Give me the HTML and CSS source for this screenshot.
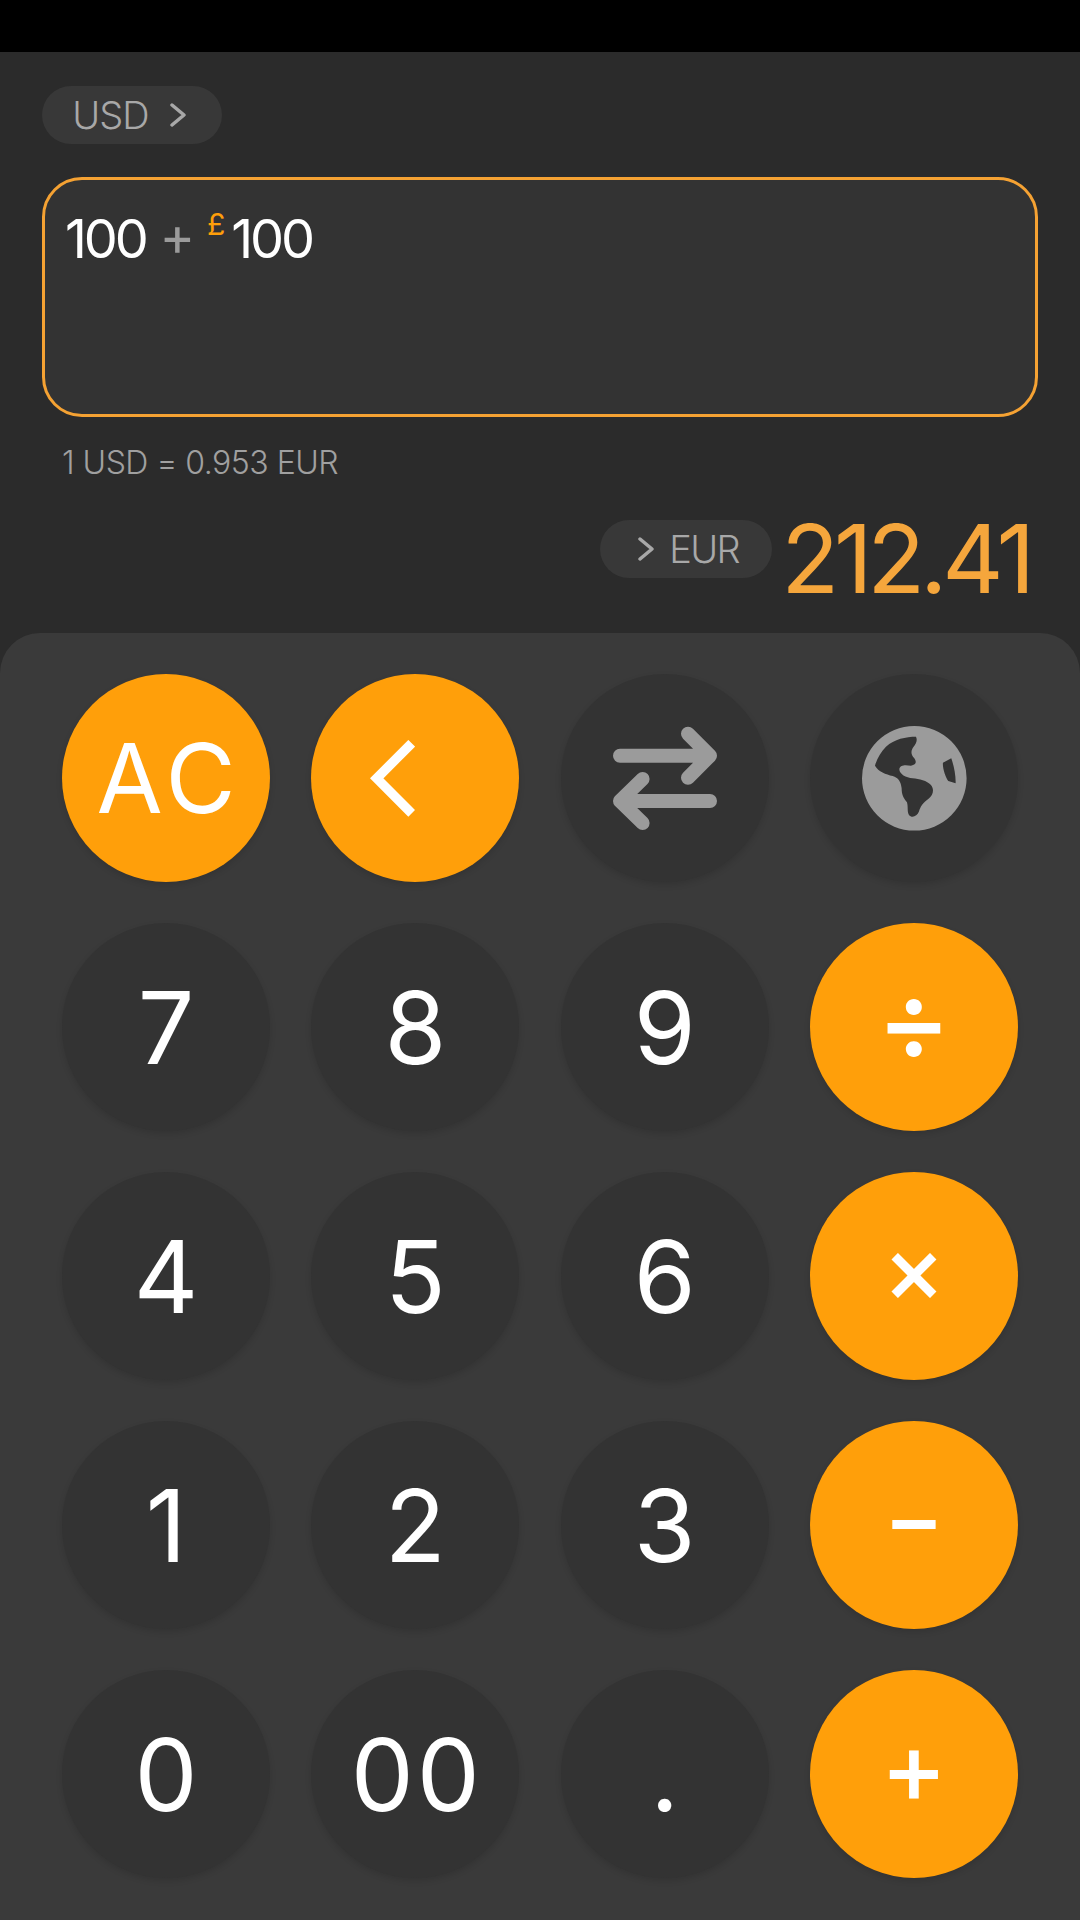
FILE: index.html
```html
<!DOCTYPE html>
<html lang="en">
<head>
<meta charset="utf-8">
<title>Currency calculator</title>
<link rel="stylesheet" href="styles.css">
</head>
<body>
<div class="app">
  <div class="status"></div>
  <section class="display">
    <button class="pill pill-from"><span>USD</span>
      <svg class="chev" viewBox="0 0 16 24"><path d="M2 2l12 10L2 22"/></svg>
    </button>
    <div class="input">
      <span class="num">100</span><span class="op">+</span><span class="cur">£</span><span class="num">100</span>
    </div>
    <div class="rate">1 USD = 0.953 EUR</div>
    <div class="result-row">
      <button class="pill pill-to">
        <svg class="chev" viewBox="0 0 16 24"><path d="M2 2l12 10L2 22"/></svg>
        <span>EUR</span></button>
      <div class="result">212.41</div>
    </div>
  </section>
  <section class="pad">
    <button class="key op-key ac">AC</button>
    <button class="key op-key">
      <svg class="ico-back" viewBox="0 0 45 77"><path d="M41.7 3.3L6.7 38.3l35 35"/></svg>
    </button>
    <button class="key">
      <svg class="ico" viewBox="0 0 120 120"><path d="M15 37.7H105M83 15.7l22 22-22 22M105 83H15M37.6 61L15 83l22.6 22"/></svg>
    </button>
    <button class="key">
      <svg class="ico-globe" viewBox="33 33 314 314"><path fill-rule="evenodd" d="M33 190a157 157 0 1 0 314 0a157 157 0 1 0-314 0zM195 65C165 65 130 72 105 95C90 110 78 130 72 152C82 170 105 178 125 183C142 188 150 200 152 220C152 240 158 250 168 262C172 275 168 290 174 300C182 310 198 305 204 290C208 275 215 265 232 252C248 240 250 222 240 210C228 197 205 192 185 190C165 188 145 178 145 162C148 148 165 150 180 152C195 150 198 142 190 130C178 118 180 105 188 95C196 85 200 75 195 65ZM301 130L276 143C274 160 285 190 292 198L314 205C315 180 308 150 301 130Z"/></svg>
    </button>
    <button class="key">7</button><button class="key">8</button><button class="key">9</button>
    <button class="key op-key sym sym-div">÷</button>
    <button class="key">4</button><button class="key">5</button><button class="key">6</button>
    <button class="key op-key sym sym-mul">×</button>
    <button class="key">1</button><button class="key">2</button><button class="key">3</button>
    <button class="key op-key sym sym-sub">−</button>
    <button class="key">0</button><button class="key double">00</button><button class="key">.</button>
    <button class="key op-key sym sym-add">+</button>
  </section>
</div>
</body>
</html>
```
FILE: styles.css
```css
* { box-sizing: border-box; }
html, body { margin: 0; padding: 0; background: #2b2b2b; }
.app { width: 1080px; height: 1920px; display: flex; flex-direction: column; font-family: Inter, "Liberation Sans", sans-serif; overflow: hidden; }
.status { height: 52px; background: #000; flex: none; }
.display { height: 581px; flex: none; background: #2b2b2b; padding: 34px 42px 0; display: flex; flex-direction: column; align-items: stretch; }
button { font-family: inherit; border: 0; padding: 0; margin: 0; }
.pill { background: #383838; color: #a8a8a8; border-radius: 29px; height: 58px; font-size: 38px; font-weight: 300; letter-spacing: -1px; display: inline-flex; align-items: center; justify-content: center; flex: none; }
.pill-from { width: 180px; gap: 21px; padding-right: 6px; align-self: flex-start; }
.pill-to { width: 172px; gap: 15px; padding-left: 5px; margin-top: 3px; letter-spacing: -1.6px; }
.chev { width: 16px; height: 24px; fill: none; stroke: #a8a8a8; stroke-width: 3.5; stroke-linecap: round; stroke-linejoin: round; }
.input { margin-top: 33px; height: 240px; background: #333; border: 3px solid #f5a233; border-radius: 40px; padding: 26px 20px 0; font-size: 54px; font-weight: 400; letter-spacing: -3.2px; line-height: 66px; display: flex; align-items: flex-start; }
.num { color: #fff; }
.op { color: #9b9b9b; margin: -3px 15px 0 14px; }
.cur { color: #ff9f0a; font-size: 30px; line-height: 36px; letter-spacing: 0; margin-right: 6px; }
.rate { margin: 26px 0 0 20px; color: #a0a0a0; font-size: 32px; font-weight: 300; letter-spacing: -0.5px; line-height: 40px; }
.result-row { margin-top: 34px; display: flex; justify-content: flex-end; align-items: flex-start; gap: 9px; padding-right: 8px; }
.result { color: #f5a63c; font-size: 95px; font-weight: 400; letter-spacing: -5.2px; line-height: 84px; }
.pad { flex: 1; background: #3a3a3a; border-radius: 40px 40px 0 0; padding: 41px 62px 0; display: grid; grid-template-columns: repeat(4, 208px); grid-auto-rows: 208px; column-gap: 41.33px; row-gap: 41px; }
.key { width: 208px; height: 208px; border-radius: 50%; background: #333; color: #fff; font-size: 100px; font-weight: 400; display: flex; align-items: center; justify-content: center; box-shadow: 0 3px 6px rgba(0,0,0,.12); }
.op-key { background: #ff9f0a; }
.ac { font-size: 96px; letter-spacing: 6px; padding-left: 6px; }
.double { letter-spacing: 3px; padding-left: 3px; }
.sym { padding-bottom: 16px; font-weight: 500; }
.sym-div { font-size: 112px; }
.sym-mul { font-size: 94px; }
.sym-sub { font-size: 92px; }
.sym-add { font-size: 100px; }
.ico { width: 120px; height: 120px; fill: none; stroke: #9b9b9b; stroke-width: 14; stroke-linecap: round; stroke-linejoin: round; }
.ico-back { width: 45px; height: 77px; fill: none; stroke: #fff; stroke-width: 9.5; margin-right: 46px; }
.ico-globe { width: 104.6px; height: 104.6px; fill: #9b9b9b; overflow: visible; flex: none; }
```
